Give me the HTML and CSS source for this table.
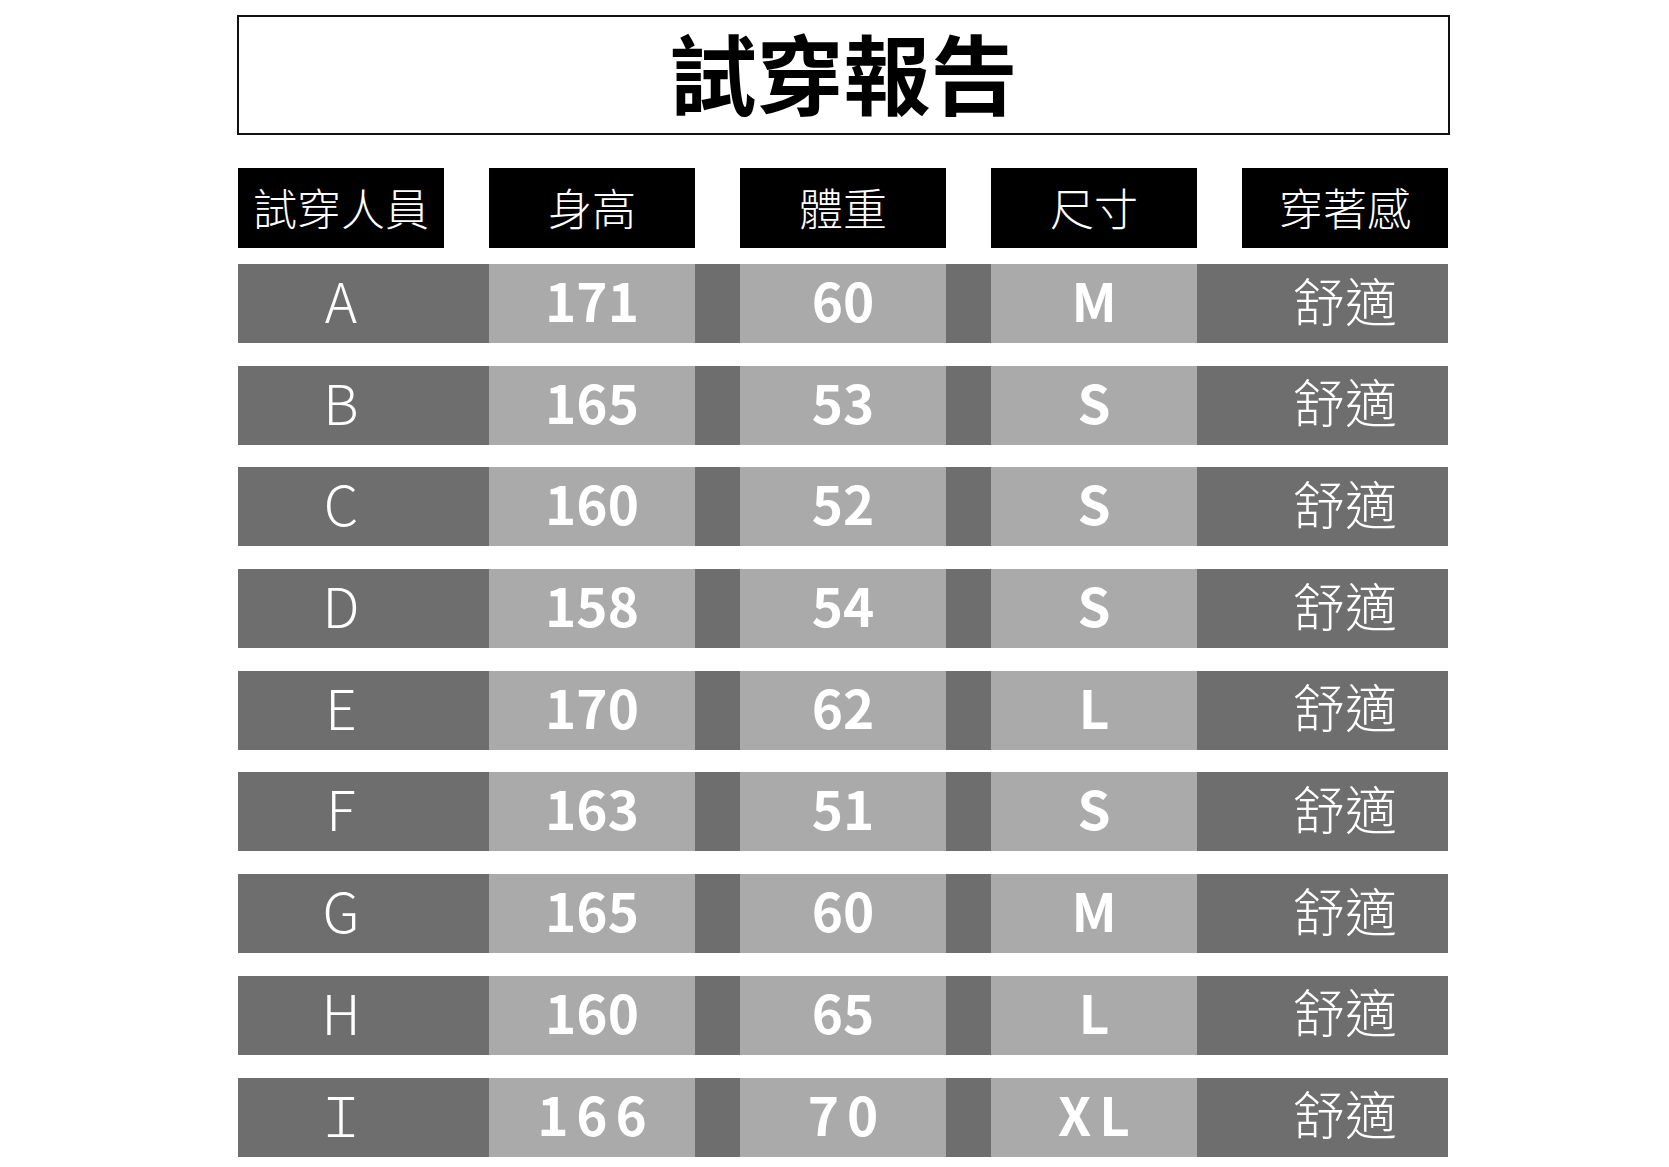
FILE: index.html
```html
<!DOCTYPE html>
<html lang="zh-Hant">
<head>
<meta charset="utf-8">
<title>試穿報告</title>
<link rel="stylesheet" href="styles.css">
</head>
<body>
<div class="page">
  <div class="title-box"><h1 class="title">試穿報告</h1></div>
  <div class="table">
    <div class="row head">
      <div class="hcell">試穿人員</div>
      <div class="hcell">身高</div>
      <div class="hcell">體重</div>
      <div class="hcell">尺寸</div>
      <div class="hcell">穿著感</div>
    </div>
    <div class="row data"><div class="cell name">A</div><div class="cell num">171</div><div class="cell num">60</div><div class="cell num">M</div><div class="cell feel">舒適</div></div>
    <div class="row data"><div class="cell name">B</div><div class="cell num">165</div><div class="cell num">53</div><div class="cell num">S</div><div class="cell feel">舒適</div></div>
    <div class="row data"><div class="cell name">C</div><div class="cell num">160</div><div class="cell num">52</div><div class="cell num">S</div><div class="cell feel">舒適</div></div>
    <div class="row data"><div class="cell name">D</div><div class="cell num">158</div><div class="cell num">54</div><div class="cell num">S</div><div class="cell feel">舒適</div></div>
    <div class="row data"><div class="cell name">E</div><div class="cell num">170</div><div class="cell num">62</div><div class="cell num">L</div><div class="cell feel">舒適</div></div>
    <div class="row data"><div class="cell name">F</div><div class="cell num">163</div><div class="cell num">51</div><div class="cell num">S</div><div class="cell feel">舒適</div></div>
    <div class="row data"><div class="cell name">G</div><div class="cell num">165</div><div class="cell num">60</div><div class="cell num">M</div><div class="cell feel">舒適</div></div>
    <div class="row data"><div class="cell name">H</div><div class="cell num">160</div><div class="cell num">65</div><div class="cell num">L</div><div class="cell feel">舒適</div></div>
    <div class="row data"><div class="cell name">Ｉ</div><div class="cell num wide">166</div><div class="cell num wide">70</div><div class="cell num wide">XL</div><div class="cell feel">舒適</div></div>
  </div>
</div>
</body>
</html>
```

FILE: styles.css
```css
html, body {
  margin: 0;
  padding: 0;
  background: #ffffff;
}

body {
  font-family: "Noto Sans CJK TC", "Noto Sans", sans-serif;
  color: #000;
}

.page {
  padding: 15px 0 0 237px;
}

.title-box {
  width: 1209px;
  height: 116px;
  border: 2px solid #111;
  display: flex;
  align-items: center;
  justify-content: center;
  box-sizing: content-box;
}

.title {
  margin: 0;
  padding-bottom: 8px;
  font-size: 87px;
  font-weight: 700;
  line-height: 1;
  color: #000;
}

.table {
  margin-top: 33px;
  margin-left: 1px;
  width: 1210px;
  display: flex;
  flex-direction: column;
  gap: 22.7px;
}

.row {
  display: grid;
  grid-template-columns: repeat(5, 206px);
  column-gap: 45px;
}

.head {
  height: 80px;
  margin-bottom: -6.7px;
}

.hcell {
  background: #000;
  color: #fff;
  display: flex;
  align-items: center;
  justify-content: center;
  padding-bottom: 2px;
  font-size: 44px;
  font-weight: 300;
  line-height: 1;
}

.data {
  height: 79px;
  background: #6e6e6e;
}

.cell {
  display: flex;
  align-items: center;
  justify-content: center;
  padding-bottom: 8px;
  color: #fff;
  line-height: 1;
}

.name {
  font-size: 55px;
  font-weight: 300;
}

.num {
  background: #aaaaaa;
  font-size: 53px;
  font-weight: 700;
}

.num.wide {
  letter-spacing: 0.15em;
  text-indent: 0.15em;
}

.feel {
  font-size: 52px;
  font-weight: 300;
}
```
